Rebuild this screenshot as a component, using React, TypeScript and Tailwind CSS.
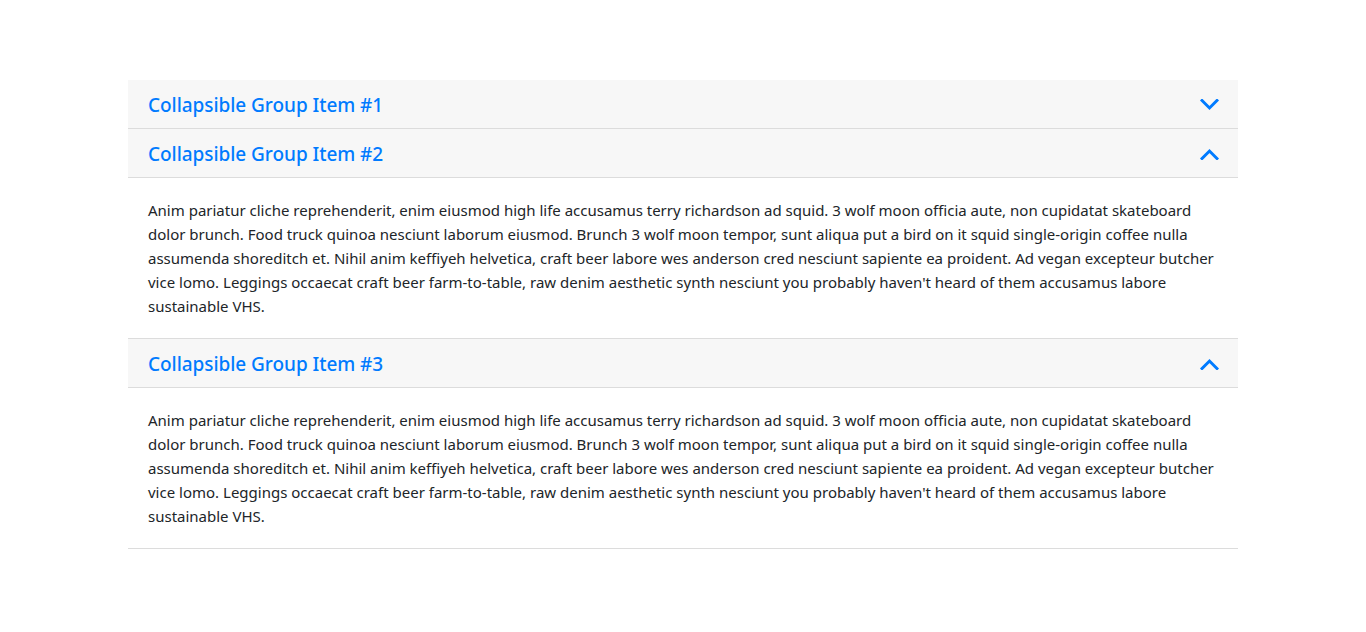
import React from "react";

const TEXT =
  "Anim pariatur cliche reprehenderit, enim eiusmod high life accusamus terry richardson ad squid. 3 wolf moon officia aute, non cupidatat skateboard dolor brunch. Food truck quinoa nesciunt laborum eiusmod. Brunch 3 wolf moon tempor, sunt aliqua put a bird on it squid single-origin coffee nulla assumenda shoreditch et. Nihil anim keffiyeh helvetica, craft beer labore wes anderson cred nesciunt sapiente ea proident. Ad vegan excepteur butcher vice lomo. Leggings occaecat craft beer farm-to-table, raw denim aesthetic synth nesciunt you probably haven't heard of them accusamus labore sustainable VHS.";

function Chevron({ up }: { up: boolean }) {
  return (
    <svg width="19" height="12" viewBox="0 0 19 12" className="text-[#007bff]">
      <path
        d={up ? "M2 10.5 L9.5 3 L17 10.5" : "M2 1.5 L9.5 9 L17 1.5"}
        fill="none"
        stroke="currentColor"
        strokeWidth="3"
        strokeLinecap="square"
      />
    </svg>
  );
}

function Item({ title, open }: { title: string; open: boolean }) {
  return (
    <div className="border-b border-[#dcdcdc]">
      <div className="flex h-[48px] items-center justify-between bg-[#f7f7f7] pl-[20px] pr-[19px] pt-[2px]">
        <span className="text-[19px] font-medium tracking-[-0.05px] text-[#007bff]">{title}</span>
        <Chevron up={open} />
      </div>
      {open && (
        <div className="border-t border-[#dcdcdc] px-[20px] py-[20px] text-[15px] leading-[24px] text-[#212529]">
          {TEXT}
        </div>
      )}
    </div>
  );
}

export default function App() {
  return (
    <div
      className="min-h-[632px] bg-white pt-[80px]"
      style={{ fontFamily: '"Noto Sans", "Open Sans", sans-serif' }}
    >
      <div className="mx-auto w-[1110px]">
        <Item title="Collapsible Group Item #1" open={false} />
        <Item title="Collapsible Group Item #2" open={true} />
        <Item title="Collapsible Group Item #3" open={true} />
      </div>
    </div>
  );
}
